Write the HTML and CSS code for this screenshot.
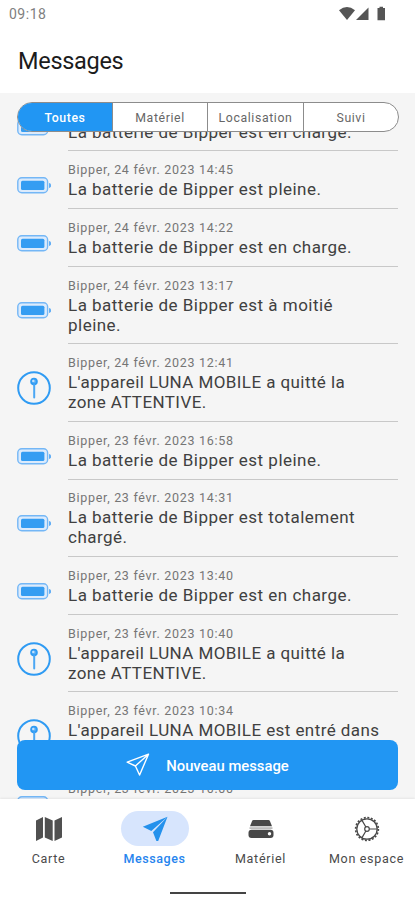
FILE: index.html
```html
<!DOCTYPE html>
<html lang="fr">
<head>
<meta charset="utf-8">
<title>Messages</title>
<link rel="stylesheet" href="styles.css">
</head>
<body>
<svg class="defs" width="0" height="0">
  <symbol id="battery" viewBox="0 0 34 17">
    <rect x=".8" y=".8" width="29.800" height="15" rx="4" fill="#dcebfc" stroke="#74b7f6" stroke-width="1.400"/>
    <rect x="4" y="3.800" width="23.400" height="9.200" rx="1.500" fill="#359df2"/>
    <path d="M32 6v5c1.800-.5 2.200-1.400 2.200-2.500S33.800 6.500 32 6z" fill="#62aef5"/>
  </symbol>
  <symbol id="pin" viewBox="0 0 34 34">
    <circle cx="17" cy="17" r="15.800" fill="none" stroke="#2f9bf3" stroke-width="2"/>
    <circle cx="17" cy="10.600" r="2.900" fill="#5aaef5" stroke="#2f9bf3" stroke-width="1.800"/>
    <circle cx="16.300" cy="9.900" r="1.200" fill="#c5e1fb"/>
    <path d="M17.200 14v12.500" stroke="#4ba7f4" stroke-width="2" stroke-linecap="round"/>
  </symbol>
</svg>
<header class="top">
  <div class="status">
    <span>09:18</span>
    <svg width="48" height="16" viewBox="0 0 48 16" fill="#555">
      <path d="M0 4.300Q8-2.500 16 4.300L8 14z"/>
      <path d="M29.500 1.500V14H17z"/>
      <path d="M38.500 2h2V.800h3.500V2h2v12.200h-7.500z"/>
    </svg>
  </div>
  <h1>Messages</h1>
</header>
<main>
  <nav class="tabs">
    <span class="on">Toutes</span><span>Matériel</span><span>Localisation</span><span>Suivi</span>
  </nav>
  <ul class="list">
    <li><svg class="bat"><use href="#battery"/></svg><div><small>&nbsp;</small><p>La batterie de Bipper est en charge.</p></div></li>
    <li><svg class="bat"><use href="#battery"/></svg><div><small>Bipper, 24 févr. 2023 14:45</small><p>La batterie de Bipper est pleine.</p></div></li>
    <li><svg class="bat"><use href="#battery"/></svg><div><small>Bipper, 24 févr. 2023 14:22</small><p>La batterie de Bipper est en charge.</p></div></li>
    <li><svg class="bat"><use href="#battery"/></svg><div><small>Bipper, 24 févr. 2023 13:17</small><p>La batterie de Bipper est à moitié<br>pleine.</p></div></li>
    <li class="zone"><svg class="pin"><use href="#pin"/></svg><div><small>Bipper, 24 févr. 2023 12:41</small><p>L'appareil LUNA MOBILE a quitté la<br>zone ATTENTIVE.</p></div></li>
    <li><svg class="bat"><use href="#battery"/></svg><div><small>Bipper, 23 févr. 2023 16:58</small><p>La batterie de Bipper est pleine.</p></div></li>
    <li><svg class="bat"><use href="#battery"/></svg><div><small>Bipper, 23 févr. 2023 14:31</small><p>La batterie de Bipper est totalement<br>chargé.</p></div></li>
    <li><svg class="bat"><use href="#battery"/></svg><div><small>Bipper, 23 févr. 2023 13:40</small><p>La batterie de Bipper est en charge.</p></div></li>
    <li class="zone"><svg class="pin"><use href="#pin"/></svg><div><small>Bipper, 23 févr. 2023 10:40</small><p>L'appareil LUNA MOBILE a quitté la<br>zone ATTENTIVE.</p></div></li>
    <li class="zone"><svg class="pin"><use href="#pin"/></svg><div><small>Bipper, 23 févr. 2023 10:34</small><p>L'appareil LUNA MOBILE est entré dans<br>&nbsp;</p></div></li>
    <li><svg class="bat"><use href="#battery"/></svg><div><small>Bipper, 23 févr. 2023 10:00</small></div></li>
  </ul>
  <button class="new">
    <svg width="24" height="24" viewBox="0 0 24 24" fill="none" stroke="#fff" stroke-width="1.400" stroke-linejoin="round"><path d="M22.500 1.200L1.200 9.200l8.200 3.800 4.200 9zM22.500 1.200L9.400 13"/></svg>
    <span>Nouveau message</span>
  </button>
</main>
<footer>
  <nav class="bar">
    <a><i><svg width="28" height="26" viewBox="0 0 28 26" fill="#505050"><path d="M1 4.500L8 1v20.500L1 25zM9.800 1l7.900 3.500V25L9.800 21.500zM19.500 4.500L27 1v20.500L19.500 25z"/></svg></i>Carte</a>
    <a class="on"><i><svg width="26" height="26" viewBox="0 0 26 26" fill="#2491ec"><path d="M25.500.800L.800 10.800l8.500 4.200zM25.500.800L11 16.200l3.400 8.800h1.800z"/></svg></i>Messages</a>
    <a><i><svg width="26" height="20" viewBox="0 0 26 20" fill="#484848"><path d="M5.500 1h15q1 0 1.400 1L24 7.300H2L4.100 2q.4-1 1.400-1z"/><path d="M1.500 8.200h23V10h-23z" fill="#bbb"/><rect x=".5" y="10.800" width="25" height="8.200" rx="3"/><circle cx="21.500" cy="14.700" r="1.700" fill="#fff"/></svg></i>Matériel</a>
    <a><i><svg width="26" height="26" viewBox="0 0 26 26" fill="none" stroke="#484848"><circle cx="13" cy="13" r="11.400" stroke-width="1.600" stroke-dasharray="2 1.581"/><circle cx="13" cy="13" r="10.200" stroke-width="1.300"/><circle cx="13" cy="13" r="2.300" stroke-width="1.200"/><path d="M15.300 13H23M11.900 11L8 4.400M11.900 15L8 21.600" stroke-width="1.200"/></svg></i>Mon espace</a>
  </nav>
  <div class="home"></div>
</footer>
</body>
</html>
```
FILE: styles.css
```css
* { box-sizing: border-box; margin: 0; padding: 0; }
body { width: 415px; height: 900px; overflow: hidden; display: flex; flex-direction: column; background: #fff; font-family: Roboto, sans-serif; color: #222; }
.defs { position: absolute; }
.top { height: 93px; flex: none; }
.status { display: flex; justify-content: space-between; align-items: center; padding: 5px 28px 0 9px; height: 23px; font-size: 14px; letter-spacing: .5px; color: #808080; }
h1 { padding: 22px 18px 0; font-size: 23.500px; line-height: 32px; font-weight: 400; letter-spacing: -.3px; color: #1c1c1c; }
main { position: relative; height: 706px; flex: none; overflow: hidden; background: #f5f5f5; }
.tabs { position: absolute; z-index: 1; left: 17px; top: 9px; width: 382px; height: 30px; display: grid; grid-template-columns: 94px 95px 96px 1fr; border: 1px solid #8c8c8c; border-radius: 15px; overflow: hidden; background: #fff; }
.tabs span { display: flex; align-items: center; justify-content: center; padding-top: 1px; font-size: 12.300px; letter-spacing: .600px; color: #666; border-left: 1px solid #8c8c8c; }
.tabs .on { background: #2196f3; color: #fff; font-weight: 500; font-size: 12.300px; border: 0; }
.list { list-style: none; padding: .600px 17px 0; }
li { display: flex; align-items: center; gap: 17px; padding-top: 10.900px; }
li svg { width: 34px; flex: none; }
.bat { height: 17px; }
.pin { height: 34px; }
li div { flex: 1; padding-bottom: 7.940px; border-bottom: 1px solid #c8c8c8; }
li:last-child div { padding-bottom: 30px; }
small { display: block; font-size: 12.500px; line-height: 16px; letter-spacing: .7px; color: #757575; white-space: nowrap; }
p { margin-top: 2.100px; font-size: 17px; line-height: 19.800px; letter-spacing: .480px; color: #404040; white-space: nowrap; }
.zone p { letter-spacing: .420px; }
.new { position: absolute; z-index: 1; left: 17px; top: 647px; width: 381px; height: 50px; border: 0; border-radius: 8px; background: #2196f3; color: #fff; display: flex; align-items: center; justify-content: center; gap: 16px; font: 500 14.800px Roboto, sans-serif; }
.new span { padding-top: 1px; }
footer { flex: 1; background: #fff; box-shadow: 0 -1px 2px #0001; z-index: 2; }
.bar { display: grid; grid-template-columns: repeat(4, 106px); margin-left: -4.500px; padding-top: 12px; }
.bar a { display: flex; flex-direction: column; align-items: center; font-size: 12.500px; line-height: 16px; letter-spacing: .7px; color: #4a4a4a; white-space: nowrap; }
.bar i { display: flex; align-items: center; justify-content: center; width: 68px; height: 35px; border-radius: 18px; margin-bottom: 5px; }
.bar .on { color: #2684ee; font-weight: 500; letter-spacing: .600px; }
.bar .on i { background: #d7e5fd; }
.home { width: 76px; height: 2px; margin: 25px auto 0; background: #444; }
```
